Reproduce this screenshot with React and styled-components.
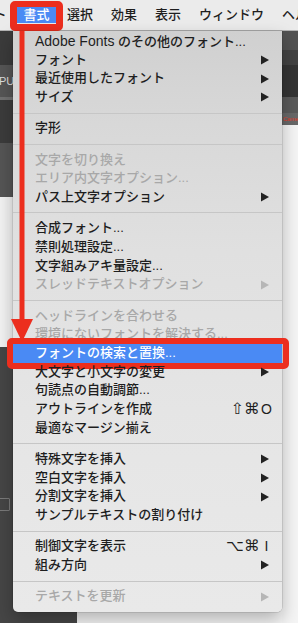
import React from 'react';
import styled, { createGlobalStyle, css } from 'styled-components';

const FONT = `"Liberation Sans", "Noto Sans CJK JP", sans-serif`;
const RED = '#ec2e1e';
const BLUE = '#4a8af4';

const Global = createGlobalStyle`
  html, body { margin: 0; padding: 0; background: #f6f6f6; overflow: hidden; }
  #root { width: 298px; height: 623px; }
`;

const Page = styled.div`
  position: relative;
  width: 298px;
  height: 623px;
  overflow: hidden;
  display: flex;
  flex-direction: column;
  font-family: ${FONT};
  background: #f6f6f6;
`;

const MenuBar = styled.div`
  flex-shrink: 0;
  height: 30px;
  border-bottom: 1px solid #b4b4b4;
  background: #ebebeb;
  display: flex;
  align-items: center;
  font-size: 13px;
  font-weight: 500;
  color: #1e1e1e;
  white-space: nowrap;
`;

const Title = styled.div`
  padding: 0 9px;
  line-height: 16px;
  flex-shrink: 0;
  ${(p) => p.$offset !== undefined && `margin-left: ${p.$offset}px;`}
`;

const ActiveTitle = styled.div`
  position: relative;
  flex-shrink: 0;
  margin: 0 2px 0 1.5px;
  padding: 0 6.5px;
  height: 16px;
  line-height: 16px;
  background: ${BLUE};
  color: #fff;
  &::after {
    content: '';
    position: absolute;
    top: -6px;
    bottom: -8px;
    left: -7px;
    right: -7px;
    border: 7px solid ${RED};
    border-width: 6px 7px 7px 7px;
    border-radius: 5px;
  }
`;

const Workspace = styled.div`
  flex: 1;
  display: grid;
  grid-template-columns: 77px 1fr 16px;
  min-height: 0;
`;

const Dock = styled.div`
  display: flex;
  flex-direction: column;
  overflow: hidden;
`;

const Block = styled.div`
  flex-shrink: 0;
  height: ${(p) => (p.$h ? `${p.$h}px` : 'auto')};
  background: ${(p) => p.$bg};
  display: flex;
  align-items: center;
  ${(p) => p.$grow && 'flex: 1; align-items: flex-start;'}
`;

const Canvas = styled.div`
  background: #f7f7f7;
`;

const DockLabel = styled.span`
  font-size: 11px;
  color: #dedede;
  margin-left: -1px;
  line-height: 12px;
`;

const RedNote = styled.span`
  font-size: 6px;
  color: #e33a2a;
  line-height: 6px;
  margin-left: 1px;
`;

const DockIcon = styled.div`
  margin-top: 151px;
  margin-left: -2px;
  width: 10px;
  height: 11px;
  border: 1px solid #7a7a7a;
  border-radius: 1px;
`;

const Panel = styled.div`
  position: absolute;
  top: 31px;
  left: 13px;
  width: 269px;
  box-sizing: border-box;
  padding: 1px 0 5.6px;
  background: linear-gradient(180deg, #d0d0d0 0%, #d8d8d8 16%, #e0e0e0 38%, #e5e5e5 65%, #e9e9e9 100%);
  border-radius: 0 0 5px 5px;
  box-shadow: 0 0 0 0.5px rgba(0, 0, 0, 0.18), 0 8px 18px rgba(0, 0, 0, 0.28);
`;

const Item = styled.div`
  position: relative;
  height: 18.7px;
  display: flex;
  align-items: center;
  padding-left: 22px;
  font-size: 13px;
  font-weight: 500;
  color: ${(p) => (p.$active ? '#fff' : p.$disabled ? '#a8a8a8' : '#1e1e1e')};
  background: ${(p) => (p.$active ? BLUE : 'transparent')};
  ${(p) =>
    p.$active &&
    css`
      &::after {
        content: '';
        position: absolute;
        top: -6px;
        bottom: -6px;
        left: -6px;
        right: -7px;
        border: 6px solid ${RED};
        border-radius: 5px;
      }
    `}
`;

const Label = styled.span`
  flex: 1;
  white-space: nowrap;
  line-height: 18.7px;
`;

const Latin = styled.span`
  font-size: 14px;
`;

const SubArrow = styled.svg`
  flex-shrink: 0;
  margin-right: 13px;
  fill: ${(p) => (p.$disabled ? '#b6b6b6' : '#222')};
`;

const Shortcut = styled.span`
  display: flex;
  align-items: center;
  margin-right: 9px;
  line-height: 18.7px;
  color: #1e1e1e;
`;

const Modifiers = styled.span`
  font-family: "DejaVu Sans", sans-serif;
  font-size: 15.5px;
  letter-spacing: 0.5px;
`;

const Key = styled.span`
  width: 13px;
  text-align: center;
  font-family: "Liberation Sans", sans-serif;
  font-size: 14px;
`;

const Separator = styled.div`
  height: 1px;
  margin: 5.8px 0;
  background: #c6c6c6;
`;

const Annotation = styled.svg`
  position: absolute;
  top: 31px;
  left: 0;
  pointer-events: none;
`;

const SEP = { sep: true };
const items = [
  { latin: 'Adobe Fonts', label: ' のその他のフォント...' },
  { label: 'フォント', sub: true },
  { label: '最近使用したフォント', sub: true },
  { label: 'サイズ', sub: true },
  SEP,
  { label: '字形' },
  SEP,
  { label: '文字を切り換え', disabled: true },
  { label: 'エリア内文字オプション...', disabled: true },
  { label: 'パス上文字オプション', sub: true },
  SEP,
  { label: '合成フォント...' },
  { label: '禁則処理設定...' },
  { label: '文字組みアキ量設定...' },
  { label: 'スレッドテキストオプション', disabled: true, sub: true },
  SEP,
  { label: 'ヘッドラインを合わせる', disabled: true },
  { label: '環境にないフォントを解決する...', disabled: true },
  { label: 'フォントの検索と置換...', active: true },
  { label: '大文字と小文字の変更', sub: true },
  { label: '句読点の自動調節...' },
  { label: 'アウトラインを作成', mods: '⇧⌘', key: 'O' },
  { label: '最適なマージン揃え' },
  SEP,
  { label: '特殊文字を挿入', sub: true },
  { label: '空白文字を挿入', sub: true },
  { label: '分割文字を挿入', sub: true },
  { label: 'サンプルテキストの割り付け' },
  SEP,
  { label: '制御文字を表示', mods: '⌥⌘', key: 'I' },
  { label: '組み方向', sub: true },
  SEP,
  { label: 'テキストを更新', disabled: true, sub: true },
];

const leftBlocks = [
  { h: 34, bg: '#3b3b3b' },
  { h: 32, bg: '#565656', label: 'PU' },
  { h: 3, bg: '#717171' },
  { h: 43, bg: '#3c3c3c' },
  { h: 54, bg: '#555555' },
  { h: 150, bg: '#f3f3f3' },
  { grow: true, bg: '#464646', icon: true },
];

const rightBlocks = [
  { h: 19, bg: '#525252' },
  { h: 15, bg: '#424242' },
  { h: 32, bg: '#343434' },
  { h: 16, bg: '#5a5a5a' },
  { h: 12, bg: '#686868', note: 'Came' },
  { grow: true, bg: '#f5f5f5' },
];

function MenuRow({ item }) {
  return (
    <Item $active={item.active} $disabled={item.disabled}>
      <Label>
        {item.latin && <Latin>{item.latin}</Latin>}
        {item.label}
      </Label>
      {item.sub && (
        <SubArrow $disabled={item.disabled} width="8" height="10" viewBox="0 0 8 10">
          <polygon points="0,0.5 8,5 0,9.5" />
        </SubArrow>
      )}
      {item.key && (
        <Shortcut>
          <Modifiers>{item.mods}</Modifiers>
          <Key>{item.key}</Key>
        </Shortcut>
      )}
    </Item>
  );
}

export default function App() {
  return (
    <>
      <Global />
      <Page>
        <MenuBar>
          <Title $offset={-15.5}>ト</Title>
          <ActiveTitle>書式</ActiveTitle>
          <Title>選択</Title>
          <Title>効果</Title>
          <Title>表示</Title>
          <Title>ウィンドウ</Title>
          <Title>ヘルプ</Title>
        </MenuBar>
        <Workspace>
          <Dock>
            {leftBlocks.map((b, i) => (
              <Block key={i} $h={b.h} $bg={b.bg} $grow={b.grow}>
                {b.label && <DockLabel>{b.label}</DockLabel>}
                {b.icon && <DockIcon />}
              </Block>
            ))}
          </Dock>
          <Canvas />
          <Dock>
            {rightBlocks.map((b, i) => (
              <Block key={i} $h={b.h} $bg={b.bg} $grow={b.grow}>
                {b.note && <RedNote>{b.note}</RedNote>}
              </Block>
            ))}
          </Dock>
        </Workspace>

        <Panel>
          {items.map((it, i) => (it.sep ? <Separator key={i} /> : <MenuRow key={i} item={it} />))}
        </Panel>

        <Annotation width="40" height="315" viewBox="0 0 40 315">
          <rect x="19.5" y="0" width="5" height="290" fill={RED} />
          <polygon points="11,288 33,288 22,311" fill={RED} />
        </Annotation>
      </Page>
    </>
  );
}
